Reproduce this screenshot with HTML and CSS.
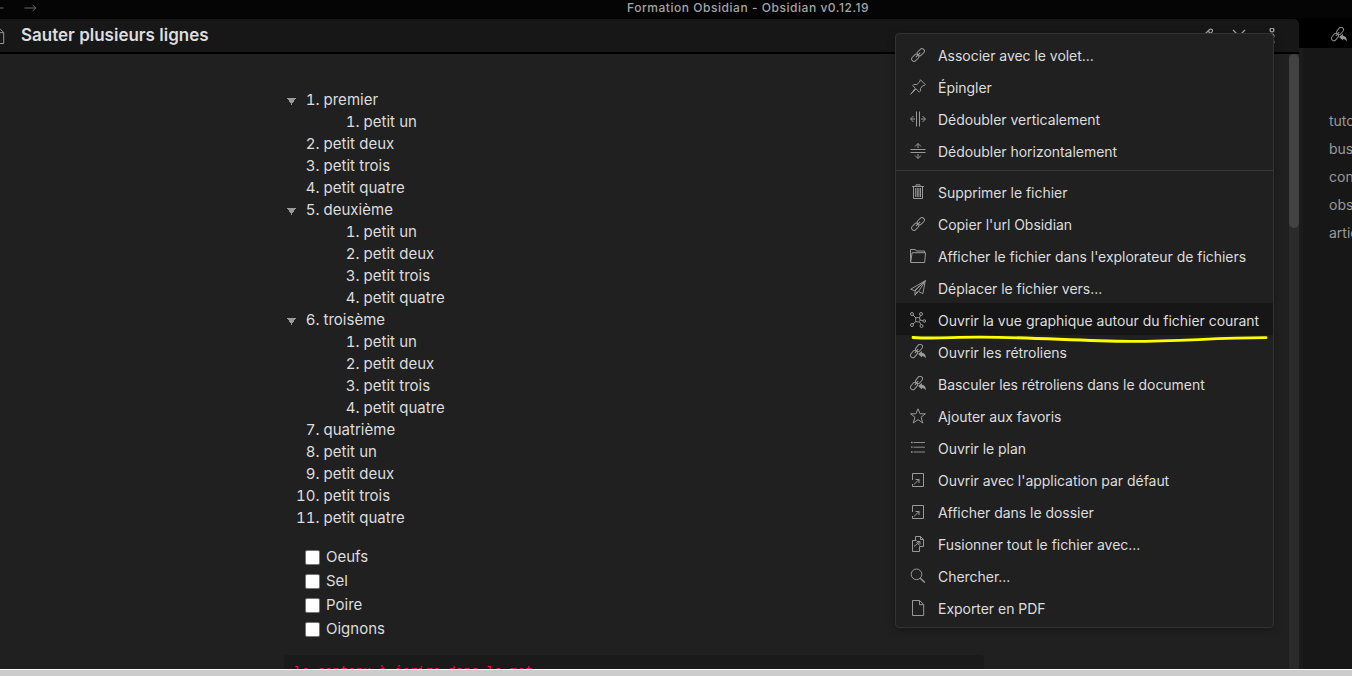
FILE: index.html
```
<!DOCTYPE html>
<html lang="fr">
<head>
<meta charset="utf-8">
<title>Formation Obsidian</title>
<link rel="stylesheet" href="styles.css">
</head>
<body>
<svg class="defs" width="0" height="0">
  <symbol id="link" viewBox="0 0 16 16"><g transform="rotate(-45 8 8)"><rect x="0" y="5.6" width="8.2" height="4.8" rx="2.4"/><rect x="7.8" y="5.6" width="8.2" height="4.8" rx="2.4"/><path d="M5 8h6"/></g></symbol>
  <symbol id="pin" viewBox="0 0 16 16"><path d="M10.4.7l4.9 4.9-1.2 1-1-.2-2.6 3 .1 2.5-1.3 1.2-3.2-3.2L.7 15.3l4.6-6.1L2.7 6.6l1.2-1.2 2.9.2 2.8-2.7z"/></symbol>
  <symbol id="splitv" viewBox="0 0 16 16"><path d="M6.5.5v15M9.500.5v15M5 8H.7M3.500 5L.5 8l3 3M11 8h4.300M12.500 5l3 3-3 3"/></symbol>
  <symbol id="splith" viewBox="0 0 16 16"><path d="M.5 6.500h15M.5 9.500h15M8 5V.7M5 3.500L8 .5l3 3M8 11v4.300M5 12.500l3 3 3-3"/></symbol>
  <symbol id="trash" viewBox="0 0 16 16"><path d="M2 2.500h12M6 2V.8h4V2M3.500 2.500v12h9v-12M5.700 4v9M7.300 4v9M8.900 4v9M10.500 4v9"/></symbol>
  <symbol id="folder" viewBox="0 0 16 16"><path d="M.6 14L.5 1.500h4.800l1 1.500h8.200v2M.6 14.500l1.500-9.800h13.400l-.8 9.800z"/></symbol>
  <symbol id="plane" viewBox="0 0 16 16"><path d="M15.300.7L.7 9.200l3.700 1.500zM15.300.7l-2.500 13-4.300-2.200zM15.300.7L5 11v4.300l2.500-4.200M5 15l3.200-3.200"/></symbol>
  <symbol id="graph" viewBox="0 0 16 16"><rect x="5.600" y="5.600" width="4.300" height="4.300" rx="1.500"/><circle cx="2" cy="2" r="1.500"/><circle cx="11" cy="2" r="1.500"/><circle cx="2" cy="13" r="1.500"/><circle cx="11.500" cy="14" r="1.500"/><circle cx="14.300" cy="9" r="1.300"/><path d="M3 3l3 3M10.400 3.400L9.500 6M3 12l3-2.700M11 12.600L9.500 10M10 8l3 .7"/></symbol>
  <symbol id="backlink" viewBox="0 0 16 16"><g transform="rotate(-50 6.500 7)"><rect x="-1.500" y="4.600" width="8" height="4.800" rx="2.400"/><rect x="6.500" y="4.600" width="8" height="4.800" rx="2.400"/><path d="M4 7h5"/></g><path class="solid" d="M8 10l4-3v1.800c2.500.2 3.900 2 3.800 5.700-.9-1.800-1.900-2.500-3.800-2.600v1.600z"/></symbol>
  <symbol id="star" viewBox="0 0 16 16"><path d="M8 .8l2.100 5h5.300l-4.300 3.400 1.700 5.800L8 11.600 3.200 15l1.700-5.800L.6 5.800h5.300z"/></symbol>
  <symbol id="outline" viewBox="0 0 16 16"><path d="M3.500 2.500h11.500M3.500 7.200h11.500M3.500 12h11.500" stroke-width=".9"/><path d="M1 2.500h1.600M1 7.200h1.600M1 12h1.600" stroke-width="1.300"/></symbol>
  <symbol id="open" viewBox="0 0 16 16"><path d="M2.500 8V1.500h11v13h-11V12M4 12.500l5-5M5.500 7.500H9V11"/></symbol>
  <symbol id="merge" viewBox="0 0 16 16"><path d="M5.500 4.500v-4h5l3 3v7H9.500M10.500.5v3h3M5.500 4.500h-3v11h7v-5M2.500 4.500h4M4 10.500l6-5M6.500 6l3 3.500M7 5.500h3v3"/></symbol>
  <symbol id="search" viewBox="0 0 16 16"><circle cx="6.500" cy="6.300" r="5.300"/><path d="M10.300 10.200l4.500 4.300" stroke-width="1.400"/></symbol>
  <symbol id="page" viewBox="0 0 16 16"><path d="M2.500.5h7.200l4 4v11H2.500zM9.500.7v4h4"/></symbol>
  <symbol id="arrow" viewBox="0 0 16 16"><path d="M2.500 8h11M10.500 4.800L13.700 8l-3.200 3.200"/></symbol>
  <symbol id="pencil" viewBox="0 0 16 16"><path d="M2 14l1-4L11.500 1.500q1.500-1 2.500 0t0 2.500L6 13zM10 3l3 3"/></symbol>
  <symbol id="close" viewBox="0 0 16 16"><path d="M2 2l12 12M14 2l-12 12"/></symbol>
  <symbol id="dots" viewBox="0 0 16 16"><circle cx="8" cy="2" r="1.900"/><circle cx="8" cy="8" r="1.900"/><circle cx="8" cy="14" r="1.900"/></symbol>
</svg>
<div class="app">
  <header class="titlebar">
    <nav class="history"><svg class="icon flip"><use href="#arrow"/></svg><svg class="icon"><use href="#arrow"/></svg></nav>
    <span class="app-title">Formation Obsidian - Obsidian v0.12.19</span>
  </header>
  <div class="workspace">
    <main class="pane">
      <div class="pane-header">
        <svg class="icon file-icon"><use href="#page"/></svg>
        <h1>Sauter plusieurs lignes</h1>
        <div class="actions"><svg class="icon"><use href="#pencil"/></svg><svg class="icon"><use href="#close"/></svg><svg class="icon"><use href="#dots"/></svg></div>
      </div>
      <div class="scroller">
        <article class="note">
          <ol class="list">
            <li class="fold">premier<ol><li>petit un</li></ol></li>
            <li>petit deux</li>
            <li>petit trois</li>
            <li>petit quatre</li>
            <li class="fold">deuxième<ol><li>petit un</li><li>petit deux</li><li>petit trois</li><li>petit quatre</li></ol></li>
            <li class="fold">troisème<ol><li>petit un</li><li>petit deux</li><li>petit trois</li><li>petit quatre</li></ol></li>
            <li>quatrième</li>
            <li>petit un</li>
            <li>petit deux</li>
            <li>petit trois</li>
            <li>petit quatre</li>
          </ol>
          <ul class="tasks">
            <li><span class="box"></span>Oeufs</li>
            <li><span class="box"></span>Sel</li>
            <li><span class="box"></span>Poire</li>
            <li><span class="box"></span>Oignons</li>
          </ul>
          <pre class="code">le contenu à écrire dans le mot</pre>
        </article>
        <div class="track"><div class="thumb"></div></div>
      </div>
    </main>
    <aside class="sidebar">
      <div class="side-tabs"><svg class="icon"><use href="#backlink"/></svg></div>
      <ul class="tags"><li>tuto</li><li>bus</li><li>con</li><li>obs</li><li>artic</li></ul>
    </aside>
  </div>
  <footer class="edge"></footer>
</div>
<div class="menu">
  <div class="item"><svg class="icon"><use href="#link"/></svg><span>Associer avec le volet...</span></div>
  <div class="item"><svg class="icon"><use href="#pin"/></svg><span>Épingler</span></div>
  <div class="item"><svg class="icon"><use href="#splitv"/></svg><span>Dédoubler verticalement</span></div>
  <div class="item"><svg class="icon"><use href="#splith"/></svg><span>Dédoubler horizontalement</span></div>
  <div class="separator"></div>
  <div class="item"><svg class="icon"><use href="#trash"/></svg><span>Supprimer le fichier</span></div>
  <div class="item"><svg class="icon"><use href="#link"/></svg><span>Copier l'url Obsidian</span></div>
  <div class="item"><svg class="icon"><use href="#folder"/></svg><span>Afficher le fichier dans l'explorateur de fichiers</span></div>
  <div class="item"><svg class="icon"><use href="#plane"/></svg><span>Déplacer le fichier vers...</span></div>
  <div class="item active"><svg class="icon"><use href="#graph"/></svg><span>Ouvrir la vue graphique autour du fichier courant</span></div>
  <div class="item"><svg class="icon"><use href="#backlink"/></svg><span>Ouvrir les rétroliens</span></div>
  <div class="item"><svg class="icon"><use href="#backlink"/></svg><span>Basculer les rétroliens dans le document</span></div>
  <div class="item"><svg class="icon"><use href="#star"/></svg><span>Ajouter aux favoris</span></div>
  <div class="item"><svg class="icon"><use href="#outline"/></svg><span>Ouvrir le plan</span></div>
  <div class="item"><svg class="icon"><use href="#open"/></svg><span>Ouvrir avec l'application par défaut</span></div>
  <div class="item"><svg class="icon"><use href="#open"/></svg><span>Afficher dans le dossier</span></div>
  <div class="item"><svg class="icon"><use href="#merge"/></svg><span>Fusionner tout le fichier avec...</span></div>
  <div class="item"><svg class="icon"><use href="#search"/></svg><span>Chercher...</span></div>
  <div class="item"><svg class="icon"><use href="#page"/></svg><span>Exporter en PDF</span></div>
  <svg class="marker" viewBox="0 0 360 10"><path d="M3 3.500C24 5 42 3.200 68 3.200C125 3 165 7 221 7.300C275 7.200 300 4 356 3.700"/></svg>
</div>
</body>
</html>
```
FILE: styles.css
```
* { box-sizing: border-box; }
body {
  margin: 0;
  background: #202020;
  color: #dcddde;
  font-family: Inter, "Liberation Sans", sans-serif;
  font-size: 15px;
  overflow: hidden;
}
.defs { display: block; }
ol, ul { margin: 0; padding: 0; list-style: none; }
.app { display: flex; flex-direction: column; width: 1352px; height: 676px; overflow: hidden; }
.icon { width: 16px; height: 16px; flex: none; fill: none; stroke: #999; stroke-width: 1; overflow: visible; }
.solid { fill: #999; stroke: none; }
.titlebar { display: flex; height: 18px; background: #050505; flex: none; }
.history { display: flex; gap: 16px; width: 144px; margin-left: -10px; }
.history .icon { stroke: #666; }
.flip { transform: scaleX(-1); }
.app-title { flex: 1; padding-left: 493px; font-size: 12px; line-height: 15px; letter-spacing: .54px; font-weight: 500; color: #a4a4a4; }
.workspace { display: flex; flex: 1; min-height: 0; background: #000; }
.pane { display: flex; flex-direction: column; width: 1299px; min-height: 0; }
.pane-header { display: flex; align-items: center; height: 35px; margin-top: 1px; flex: none; background: #171717; border-bottom: 2px solid #000; border-top-right-radius: 5px; }
.file-icon { margin-left: -10px; }
h1 { margin: 0 0 2px 15px; font-size: 17px; font-weight: 600; line-height: 20px; flex: 1; }
.actions { display: flex; gap: 17px; padding-right: 19px; }
.actions .icon { stroke: #aaa; stroke-width: 1.2; }
.scroller { display: flex; flex: 1; min-height: 0; background: #202020; }
.note { flex: 1; padding: 35px 305px 0 284px; overflow: hidden; }
.list { counter-reset: n; padding-left: 39.5px; line-height: 22px; letter-spacing: .02px; }
.list ol { counter-reset: n; padding-left: 40px; }
.list li { counter-increment: n; }
.list li::before { content: counter(n) ". "; display: inline-block; width: 40px; margin-left: -40px; text-align: right; white-space: pre; font-variant-numeric: tabular-nums; }
.list .fold::before { background: conic-gradient(from -32deg at 50% 100%, #999 64deg, transparent 0) 3px 9px / 9px 7px no-repeat; }
.tasks { margin-top: 16px; padding-left: 21px; line-height: 24px; }
.tasks li { display: flex; align-items: center; gap: 6px; }
.box { width: 15px; height: 15px; background: #fff; border: 1px solid #767676; border-radius: 2px; margin-top: 1px; }
.code { margin: 14px 0 0; padding: 6px 10px; background: #1a1a1a; border-radius: 4px; color: #d8244f; font: 12.8px/20px "DejaVu Sans Mono", monospace; }
.track { width: 10px; background: #2b2b2b; }
.thumb { height: 174px; border-radius: 5px; background: #424242; }
.sidebar { flex: 1; display: flex; flex-direction: column; overflow: hidden; }
.side-tabs { height: 30px; flex: none; padding: 9px 0 0 32px; }
.side-tabs .icon { stroke: #888; }
.tags { flex: 1; padding: 59px 0 0 26px; background: #171717; border-left: 4px solid #1b1b1b; line-height: 28px; font-size: 14px; color: #999; }
.edge { flex: none; height: 7px; background: #ccc; border-top: 1px solid #fff; }
.menu { position: absolute; left: 895px; top: 33px; width: 379px; height: 595px; padding: 4px 0; background: #202020; border: 1px solid #333; border-radius: 4px; box-shadow: 0 2px 8px rgba(0,0,0,.3); }
.item { display: flex; align-items: center; gap: 12px; height: 32px; padding: 1px 14px 0; white-space: nowrap; font-size: 14px; letter-spacing: -.035px; }
.item span { padding-top: 3px; line-height: 20px; }
.active { background: #161616; }
.separator { height: 1px; margin: 4px 0; background: #363636; }
.marker { position: absolute; left: 14px; top: 300px; width: 360px; height: 10px; fill: none; stroke: #ff0; stroke-width: 2.8; stroke-linecap: round; }
```
